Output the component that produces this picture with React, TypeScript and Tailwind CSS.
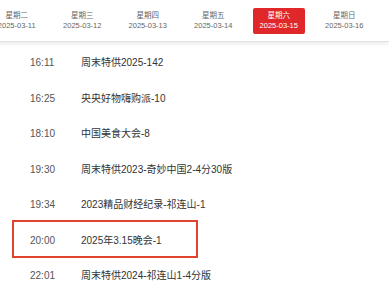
const DAYS = [
  { label: "星期二", date: "2025-03-11" },
  { label: "星期三", date: "2025-03-12" },
  { label: "星期四", date: "2025-03-13" },
  { label: "星期五", date: "2025-03-14" },
  { label: "星期六", date: "2025-03-15", active: true },
  { label: "星期日", date: "2025-03-16" },
];

const SHOWS = [
  { time: "16:11", title: "周末特供2025-142" },
  { time: "16:25", title: "央央好物嗨购派-10" },
  { time: "18:10", title: "中国美食大会-8" },
  { time: "19:30", title: "周末特供2023-奇妙中国2-4分30版" },
  { time: "19:34", title: "2023精品财经纪录-祁连山-1" },
  { time: "20:00", title: "2025年3.15晚会-1", marked: true },
  { time: "22:01", title: "周末特供2024-祁连山1-4分版" },
];

export default function App() {
  return (
    <div
      className="w-[389px] h-[292px] overflow-hidden bg-white"
      style={{ fontFamily: '"Liberation Sans", "Noto Sans CJK SC", sans-serif' }}
    >
      <div className="h-[42px] border-b border-[#e2e2e2] shadow-[0_2px_4px_rgba(0,0,0,0.08)] flex items-center ml-[-16px]">
        {DAYS.map(d => (
          <div key={d.date} className="w-[65.5px] shrink-0 flex justify-center">
            <div
              className={`w-[52px] h-[26px] rounded-[2px] flex flex-col items-center justify-center leading-[10px] text-[7.5px] ${
                d.active ? "bg-[#e0282a] text-white" : "text-[#666]"
              }`}
            >
              <span>{d.label}</span>
              <span>{d.date}</span>
            </div>
          </div>
        ))}
      </div>

      <div className="pt-[3px]">
        {SHOWS.map(s => (
          <div key={s.time} className="relative h-[35.5px] flex items-center pl-[30px] text-[10px]">
            <span className="w-[51px] text-[#555]">{s.time}</span>
            <span className="text-[#333]">{s.title}</span>
            {s.marked && (
              <div className="absolute left-[12px] top-[-3px] w-[186px] h-[38px] border-2 border-[#e1442c]" />
            )}
          </div>
        ))}
      </div>
    </div>
  );
}
